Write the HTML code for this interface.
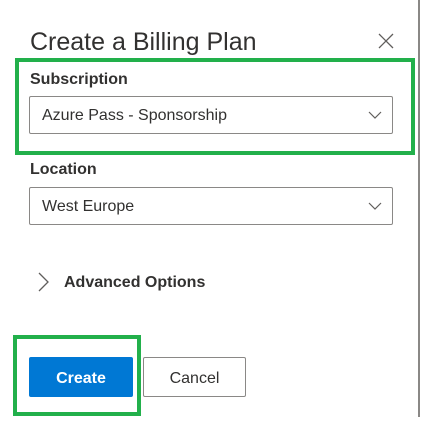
<!DOCTYPE html>
<html><head><style>
body{margin:0;width:425px;height:443px;background:#fff;position:relative;font-family:"Liberation Sans",sans-serif;color:#323130;overflow:hidden}
.a{position:absolute}
.sel{position:absolute;left:29px;width:362px;height:36px;border:1px solid #8a8886;border-radius:2px;box-sizing:content-box}
.sel span{position:absolute;left:12px;top:10px;font-size:16px;color:#323130}
.sel svg{position:absolute;right:10px;top:13px}
.lbl{position:absolute;left:30px;font-size:16px;font-weight:600;color:#323130}
</style></head><body>
<div class="a" style="left:418px;top:0;width:2px;height:417px;background:#8a8886"></div>
<div class="a" style="left:30px;top:28px;font-size:25px;color:#323130">Create a Billing Plan</div>
<svg class="a" style="left:378px;top:33px" width="16" height="16"><path d="M1 1L15 15M15 1L1 15" stroke="#605e5c" stroke-width="1.3"/></svg>
<div class="a" style="left:15px;top:58px;width:392px;height:89px;border:4px solid #22b04b"></div>
<div class="lbl" style="top:71px">Subscription</div>
<div class="sel" style="top:96px"><span>Azure Pass - Sponsorship</span><svg width="14" height="10"><path d="M1 2L7 8L13 2" fill="none" stroke="#605e5c" stroke-width="1.2"/></svg></div>
<div class="lbl" style="top:161px">Location</div>
<div class="sel" style="top:187px"><span>West Europe</span><svg width="14" height="10"><path d="M1 2L7 8L13 2" fill="none" stroke="#605e5c" stroke-width="1.2"/></svg></div>
<svg class="a" style="left:37px;top:272px" width="14" height="20"><path d="M2 1L11 10L2 19" fill="none" stroke="#605e5c" stroke-width="1.3"/></svg>
<div class="a" style="left:64px;top:274px;font-size:16px;font-weight:600">Advanced Options</div>
<div class="a" style="left:13px;top:335px;width:120px;height:73px;border:4.5px solid #22b04b"></div>
<div class="a" style="left:29px;top:357px;width:104px;height:40px;background:#0078d4;border-radius:2px;color:#fff;font-size:16px;font-weight:700;text-align:center;line-height:44px">Create</div>
<div class="a" style="left:143px;top:357px;width:101px;height:38px;border:1px solid #8a8886;border-radius:2px;font-size:16px;text-align:center;line-height:42px">Cancel</div>
</body></html>
